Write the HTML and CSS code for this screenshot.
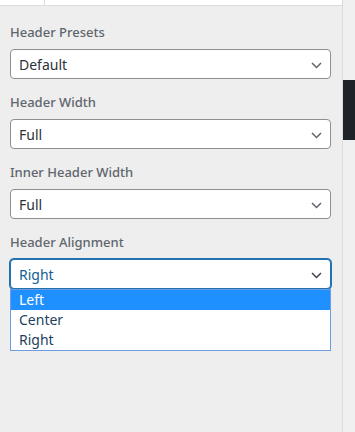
FILE: index.html
```html
<!doctype html>
<html lang="en">
<head>
  <meta charset="utf-8"/>
  <title>Header Settings</title>
  <link rel="stylesheet" href="styles.css">
</head>
<body>
  <div class="layout">
    <aside class="panel">
      <div class="tabs"><span class="tab"></span></div>
      <section class="fields">
        <div class="field">
          <label>Header Presets</label>
          <div class="select"><span>Default</span><svg width="11" height="7" viewBox="0 0 11 7"><polyline points="1,1 5.5,5.5 10,1"/></svg></div>
        </div>
        <div class="field">
          <label>Header Width</label>
          <div class="select"><span>Full</span><svg width="11" height="7" viewBox="0 0 11 7"><polyline points="1,1 5.5,5.5 10,1"/></svg></div>
        </div>
        <div class="field">
          <label>Inner Header Width</label>
          <div class="select"><span>Full</span><svg width="11" height="7" viewBox="0 0 11 7"><polyline points="1,1 5.5,5.5 10,1"/></svg></div>
        </div>
        <div class="field open">
          <label>Header Alignment</label>
          <div class="select focus"><span>Right</span><svg width="11" height="7" viewBox="0 0 11 7"><polyline points="1,1 5.5,5.5 10,1"/></svg></div>
          <ul class="options">
            <li class="active">Left</li>
            <li>Center</li>
            <li>Right</li>
          </ul>
        </div>
      </section>
    </aside>
    <div class="gutter"><div class="bar"></div></div>
  </div>
</body>
</html>
```

FILE: styles.css
```css
:root {
  --panel-bg: #eeeeee;
  --line: #dcdcde;
  --label: #5f666d;
  --text: #2c3338;
  --input-border: #8c8f94;
  --focus: #2271b1;
}
* { margin: 0; padding: 0; box-sizing: border-box; }
html, body { height: 100%; }
body { font-family: "Noto Sans", "Open Sans", sans-serif; background: #f0f0f1; }
.layout { display: flex; height: 100%; }
.panel { width: 343px; background: var(--panel-bg); border-right: 1px solid var(--line); display: flex; flex-direction: column; }
.tabs { height: 6px; background: #fff; border-bottom: 1px solid var(--line); display: flex; }
.tab { width: 45px; border-right: 1px solid var(--line); }
.fields { padding: 16px 11px 0 10px; }
.field { margin-bottom: 13px; position: relative; }
.field label { display: block; font-size: 13px; line-height: 20px; font-weight: 500; color: var(--label); margin-bottom: 7px; }
.select {
  height: 30px; background: #fff; border: 1px solid var(--input-border); border-radius: 4px;
  display: flex; align-items: center; justify-content: space-between;
  padding: 0 8px 0 8px; font-size: 14px; color: var(--text);
}
.select svg { fill: none; stroke: var(--label); stroke-width: 1.5; margin-top: 2px; }
.select.focus { border-color: var(--focus); box-shadow: 0 0 0 1px var(--focus); color: #135e96; }
.select.focus svg { stroke: #3c434a; }
.options {
  position: absolute; left: 0; right: 0; top: 57px;
  list-style: none; background: #fff; border: 1px solid #6f9be0;
  font-size: 14px; color: #1d3f5e;
}
.options li { height: 20px; line-height: 20px; padding-left: 8px; }
.options li.active { background: #1e90ff; color: #fff; }
.gutter { flex: 1; padding-top: 80px; }
.bar { height: 60px; background: #1d2327; }
```
